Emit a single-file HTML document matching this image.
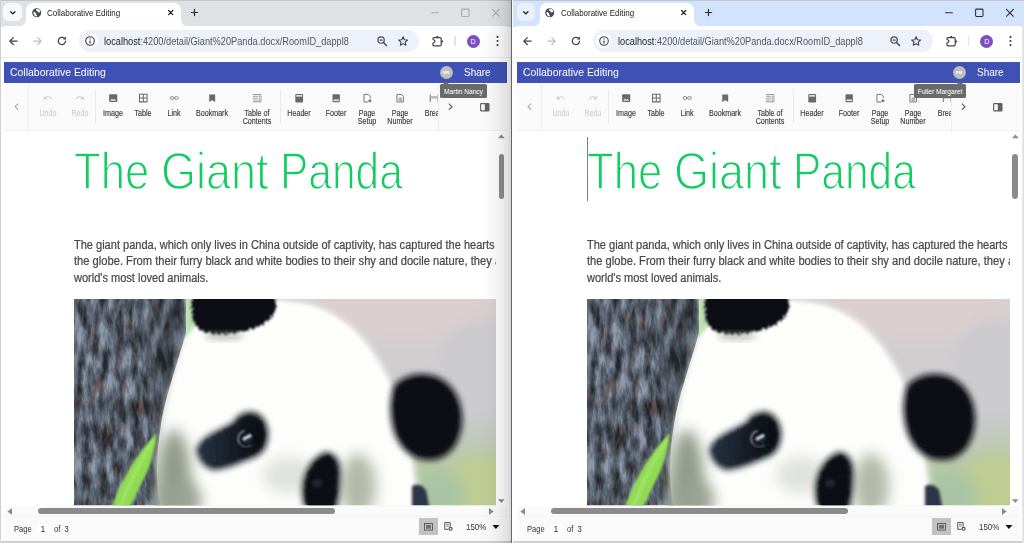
<!DOCTYPE html>
<html><head><meta charset="utf-8"><title>Collaborative Editing</title>
<style>
*{box-sizing:border-box;margin:0;padding:0}
html,body{width:1024px;height:543px;overflow:hidden;background:#fff;font-family:"Liberation Sans",sans-serif;}
.win{position:absolute;top:0;width:511px;height:543px;overflow:hidden;background:#fff}
.w1{left:0}
.w2{left:513px}
.divider{position:absolute;left:510.9px;top:0;width:1.6px;height:543px;background:#66676a}
.shadow{position:absolute;left:479px;top:0;width:32px;height:543px;background:linear-gradient(90deg,rgba(0,0,0,0) 0,rgba(0,0,0,0.012) 25%,rgba(0,0,0,0.035) 50%,rgba(0,0,0,0.07) 72%,rgba(0,0,0,0.11) 88%,rgba(0,0,0,0.17) 100%)}
.abs{position:absolute}
/* ---------- browser chrome ---------- */
.titlebar{position:absolute;left:0;top:0;width:511px;height:27px}
.inactive .titlebar{background:#dfe1e5}
.active .titlebar{background:#d3e3fd}
.topline{position:absolute;left:0;top:0;width:511px;height:1px;background:#c3c5ca}
.tabsearch{position:absolute;left:3.3px;top:2.9px;width:18.5px;height:18.6px;border-radius:5.5px}
.inactive .tabsearch{background:#f7f8fa}
.active .tabsearch{background:#e9effc}
.tab{position:absolute;left:26px;top:2.9px;width:154.7px;height:24.1px;background:#fff;border-radius:7px 7px 0 0}
.tab:before,.tab:after{content:"";position:absolute;bottom:0;width:9px;height:7px}
.tab:before{left:-9px;background:radial-gradient(ellipse 9px 7px at 0 0,transparent 95%,#fff 101%)}
.tab:after{right:-9px;background:radial-gradient(ellipse 9px 7px at 100% 0,transparent 95%,#fff 101%)}
.tabtitle{position:absolute;left:21px;top:4.1px;font-size:9.2px;line-height:12px;color:#202124;white-space:nowrap;transform:scaleX(0.867);transform-origin:0 0}
.navbar{position:absolute;left:0;top:26px;width:511px;height:31px;background:#fff;border-radius:6px 6px 0 0}
.navline{position:absolute;left:0;top:57px;width:511px;height:1px;background:#ededee}
.omni{position:absolute;left:79px;top:30.1px;width:340px;height:21.9px;border-radius:11px;background:#edf1fa}
.omni .info{position:absolute;left:3.7px;top:3.2px;width:15px;height:15px;border-radius:8px;background:#fff}
.url{position:absolute;left:25px;top:3.5px;font-size:10.6px;line-height:15px;color:#54585d;white-space:nowrap;transform:scaleX(0.870);transform-origin:0 0}
.url b{font-weight:normal;color:#1f1f1f}
.avatar{position:absolute;left:466.5px;top:35px;width:13px;height:13px;border-radius:7px;background:#7b4fc0;color:#fff;font-size:7px;line-height:13px;text-align:center}
.tbsep{position:absolute;left:454px;top:36px;width:1.8px;height:10.3px;background:#d9e5fc}
svg{position:absolute;overflow:visible}
/* ---------- app ---------- */
.edge{position:absolute;left:0;top:0;width:1.3px;height:543px;background:#cfcfcf}
.bottomedge{position:absolute;left:0;top:540.2px;width:511px;height:3px;background:linear-gradient(#f8f8f8 0,#f6f6f6 38%,#d2d2d2 46%,#cecece 100%)}
.appbar{position:absolute;left:4px;top:62.1px;width:503px;height:20.9px;background:#3f51b5;color:#fff}
.apptitle{position:absolute;left:5.5px;top:3.4px;font-size:11px;line-height:14px;white-space:nowrap;transform:scaleX(0.95);transform-origin:0 0}
.share{position:absolute;left:459.5px;top:3.4px;font-size:11px;line-height:14px;transform:scaleX(0.905);transform-origin:0 0}
.user{position:absolute;left:435.5px;top:3.9px;width:13px;height:13px;border-radius:7px;background:#bdbdbd;color:#fff;font-size:4.2px;line-height:13.8px;text-align:center;font-weight:bold}
.toolbar{position:absolute;left:4px;top:83px;width:503px;height:48px;background:#fafafa;border-bottom:1px solid #f1f1f1}
.tleft{position:absolute;left:0;top:0;width:25px;height:47px;border-right:1px solid #f0f0f0}
.tright{position:absolute;left:433.5px;top:0;width:69.5px;height:47px;border-left:1px solid #eeeeee;background:#fafafa}
.tsep{position:absolute;top:7px;width:1px;height:33px;background:#e9e9e9}
.item{position:absolute;top:0;width:0;height:46px}
.item .lbl{position:absolute;left:-40px;width:80px;top:27px;text-align:center;font-size:8.6px;line-height:7.9px;color:#3b3b3b;-webkit-text-stroke:0.15px #3b3b3b;white-space:nowrap;transform:scaleX(0.83)}
.item.dis .lbl{color:#c6c6c6;-webkit-text-stroke:0}
.item svg{left:-7.2px;top:7.8px;width:14.4px;height:14.4px}
.tip{position:absolute;top:84.3px;height:14px;border-radius:1.6px;background:#6a6a6a;color:#fff;font-size:6.6px;line-height:15.4px;text-align:center;white-space:nowrap}
.tip:before{content:"";position:absolute;top:-3px;border:3px solid transparent;border-top:0;border-bottom:3px solid #6a6a6a;margin-left:-3px}
.tip1{left:440px;width:47px}
.tip1:before{left:6px}
.tip2{left:401px;width:52px}
.tip2:before{left:46px}
/* ---------- document ---------- */
.doc{position:absolute;left:4px;top:131px;width:492.2px;height:374.6px;background:#fff;overflow:hidden}
.h1{position:absolute;left:68.5px;top:12.3px;font-size:51.5px;line-height:56px;color:#12cc62;white-space:nowrap;transform-origin:0 50%;transform:scaleX(0.849);-webkit-text-stroke:1.4px #fff;paint-order:fill stroke}
.para{position:absolute;left:70px;top:105.5px;font-size:12.3px;line-height:16.65px;color:#474747;-webkit-text-stroke:0.22px #474747;white-space:nowrap;transform:scaleX(0.896);transform-origin:0 0}
.caret{position:absolute;left:70px;top:6px;width:1px;height:64px;background:#7d7d7d}
.vscroll{position:absolute;left:496.2px;top:131px;width:10.8px;height:374.6px;background:#fff}
.vthumb{position:absolute;left:2.4px;top:22.5px;width:5.8px;height:45.4px;border-radius:3px;background:#8b8b8b}
.hscroll{position:absolute;left:4px;top:505.6px;width:503px;height:11.4px;background:#fafafa}
.hthumb{position:absolute;left:33.5px;top:2.6px;width:297px;height:5.8px;border-radius:3px;background:#8b8b8b}
.status{position:absolute;left:4px;top:515.8px;width:503px;height:24.7px;background:#fafafa;border-top:1px solid #f3f3f3;font-size:8.6px;color:#333}
.status span{position:absolute;top:7px;line-height:10px;white-space:nowrap;transform:scaleX(0.88);transform-origin:0 0}
.pgbox{position:absolute;left:33px;top:7px;width:12px;height:9.6px;background:#fff;text-align:center;line-height:10px}
.laybtn{position:absolute;left:415px;top:1.7px;width:19px;height:16.8px;background:#c2c2c2}
.inactive .wcs{stroke:#a9abaf}
.active .wcs{stroke:#2b2d31}
.chrome{position:absolute;left:0;top:0;width:511px;height:0}
.w2 .chrome{left:0.7px}
.w2 .edge{display:none}
.w2 .redge{position:absolute;left:509px;top:27px;width:2px;height:516px;background:linear-gradient(90deg,#ececec,#dcdcdc)}
.w1 .redge{display:none}
.w2 .vscroll{left:496.9px;width:10.1px}
.w2 .doc{width:492.9px}

</style></head><body>
<div class="win w1 inactive">
  <!-- browser title bar -->
  <div class="titlebar">
    <div class="topline"></div>
    <div class="chrome">
    <div class="tabsearch"><svg style="left:6.4px;top:7.8px" width="5.7" height="3.6" viewBox="0 0 8 5"><path d="M1 1 L4 4 L7 1" fill="none" stroke="#1f1f1f" stroke-width="1.9" stroke-linecap="round" stroke-linejoin="round"/></svg></div>
    <div class="tab">
      <svg style="left:5.8px;top:4.9px" width="9.4" height="9.4" viewBox="0 0 20 20"><circle cx="10" cy="10" r="9.6" fill="#474b50"/><path d="M3.2 8.2 L6.5 9 L8.8 11.5 L8.6 14 L10.6 15.6 L10.2 18 L7 17.5 L4 14.5 Z M8.2 2.4 L13 2.2 L16.4 4.4 L17.6 8 L15 9.6 L12.4 8.8 L11.6 6.2 L9.2 5.6 Z" fill="#fff"/></svg>
      <div class="tabtitle">Collaborative Editing</div>
      <svg style="left:141.6px;top:7.1px" width="5.4" height="5.2" viewBox="0 0 7 7"><path d="M0.7 0.7 L6.3 6.3 M6.3 0.7 L0.7 6.3" stroke="#202124" stroke-width="1.7" stroke-linecap="round"/></svg>
    </div>
    <svg style="left:191.3px;top:9px" width="7" height="7" viewBox="0 0 9 9"><path d="M4.5 0.5 V8.5 M0.5 4.5 H8.5" stroke="#2a2c30" stroke-width="1.6" stroke-linecap="round"/></svg>
    <!-- window controls -->
    <svg class="wc" style="left:430px;top:8px" width="70" height="10" viewBox="0 0 70 10">
      <path class="wcs" d="M1.6 4.8 H8.4 M32.5 1.1 H38.1 Q39 1.1 39 2 V7.6 Q39 8.5 38.1 8.5 H32.5 Q31.6 8.5 31.6 7.6 V2 Q31.6 1.1 32.5 1.1 Z M62.5 1.3 L69.3 8.3 M69.3 1.3 L62.5 8.3" fill="none" stroke-width="1.05" stroke-linecap="round"/>
    </svg>
    </div>
  </div>
  <!-- nav bar -->
  <div class="navbar"></div>
  <div class="navline"></div>
  <div class="chrome">
  <svg style="left:9.4px;top:37px" width="9" height="8.2" viewBox="0 0 11 10"><path d="M5.2 0.8 L1 5 L5.2 9.2 M1.2 5 H10" fill="none" stroke="#3c4043" stroke-width="1.5" stroke-linecap="round" stroke-linejoin="round"/></svg>
  <svg style="left:33px;top:37px" width="9" height="8.2" viewBox="0 0 11 10"><path d="M5.8 0.8 L10 5 L5.8 9.2 M9.8 5 H1" fill="none" stroke="#bbbdc0" stroke-width="1.5" stroke-linecap="round" stroke-linejoin="round"/></svg>
  <svg style="left:57px;top:36.3px" width="10" height="10" viewBox="0 0 11 11"><path d="M9.4 5.5 A4 4 0 1 1 8.1 2.5" fill="none" stroke="#3c4043" stroke-width="1.35" stroke-linecap="round"/><path d="M9.9 0.6 V3.9 H6.6 Z" fill="#3c4043"/></svg>
  <div class="omni">
    <div class="info"><svg style="left:2.5px;top:2.5px" width="10" height="10" viewBox="0 0 10 10"><circle cx="5" cy="5" r="4.3" fill="none" stroke="#3c4043" stroke-width="1.1"/><path d="M5 4.4 V7.4" stroke="#3c4043" stroke-width="1.2"/><circle cx="5" cy="2.9" r="0.7" fill="#3c4043"/></svg></div>
    <div class="url"><b>localhost</b>:4200/detail/Giant%20Panda.docx/RoomID_dappl8</div>
    <svg style="left:297.6px;top:5.6px" width="10.5" height="10.5" viewBox="0 0 11 11"><circle cx="4.3" cy="4.3" r="3.3" fill="none" stroke="#45494e" stroke-width="1.25"/><path d="M6.8 6.8 L10 10" stroke="#45494e" stroke-width="1.5" stroke-linecap="round"/><path d="M2.7 4.3 H5.9" stroke="#3c4043" stroke-width="1.2"/></svg>
    <svg style="left:318.8px;top:5.7px" width="10.2" height="10.2" viewBox="0 0 22 22"><path d="M11 1.8 L13.8 8 L20.6 8.7 L15.5 13.2 L17 19.9 L11 16.4 L5 19.9 L6.5 13.2 L1.4 8.7 L8.2 8 Z" fill="none" stroke="#3c4043" stroke-width="2.3" stroke-linejoin="round"/></svg>
  </div>
  <svg style="left:430px;top:33px" width="16" height="16" viewBox="0 0 16 16"><path d="M4 4.7 H10.1 Q11.2 4.7 11.2 5.8 V11.7 Q11.2 12.8 10.1 12.8 H4 Q2.9 12.8 2.9 11.7 V10.7 Q2.9 10.1 3.6 9.8 Q4.9 9.3 4.9 8.3 Q4.9 7.3 3.6 6.8 Q2.9 6.5 2.9 5.9 V5.8 Q2.9 4.7 4 4.7 Z" fill="none" stroke="#40444a" stroke-width="1.2" stroke-linejoin="round"/><path d="M6 4.7 Q6.1 2.7 7.3 2.7 Q8.5 2.7 8.6 4.7 Z" fill="#40444a"/><path d="M11.2 7.2 Q13.1 7.3 13.1 8.5 Q13.1 9.7 11.2 9.8 Z" fill="#40444a"/></svg>
  <div class="tbsep"></div>
  <div class="avatar">D</div>
  <svg style="left:495.5px;top:35.2px" width="3" height="12" viewBox="0 0 3 12"><circle cx="1.5" cy="1.9" r="1.05" fill="#3c4043"/><circle cx="1.5" cy="6" r="1.05" fill="#3c4043"/><circle cx="1.5" cy="10.1" r="1.05" fill="#3c4043"/></svg>
  </div>

  <!-- app -->
  <div class="edge"></div>
  <div class="appbar">
    <div class="apptitle">Collaborative Editing</div>
    <div class="user">MN</div>
    <div class="share">Share</div>
  </div>
  <div class="toolbar">
    <div class="tleft"><svg style="left:9.6px;top:20px" width="5" height="7.4" viewBox="0 0 6 9"><path d="M5 0.8 L1.2 4.5 L5 8.2" fill="none" stroke="#a2a2a2" stroke-width="1.25"/></svg></div>
    <div class="item dis" style="left:44px"><svg style="left:-4.95px;top:10.2px;width:9.7px;height:9.7px" viewBox="0 0 24 24"><path d="M12.5 8c-2.65 0-5.05.99-6.9 2.6L2 7v9h9l-3.62-3.62c1.39-1.16 3.16-1.88 5.12-1.88 3.54 0 6.55 2.31 7.6 5.5l2.37-.78C21.08 11.03 17.15 8 12.5 8z" fill="#cfcfcf"/></svg><div class="lbl">Undo</div></div>
    <div class="item dis" style="left:76px"><svg style="left:-4.75px;top:10.2px;width:9.7px;height:9.7px" viewBox="0 0 24 24"><path d="M18.4 10.6C16.55 8.99 14.15 8 11.5 8c-4.65 0-8.58 3.03-9.96 7.22L3.9 16c1.05-3.19 4.05-5.5 7.6-5.5 1.95 0 3.73.72 5.12 1.88L13 16h9V7l-3.6 3.6z" fill="#cfcfcf"/></svg><div class="lbl">Redo</div></div>
    <div class="tsep" style="left:91px"></div>
    <div class="item" style="left:109px"><svg viewBox="0 0 16 16"><rect x="3.5" y="3.7" width="9" height="8.6" rx="0.9" fill="#686868"/><path d="M4.8 10.8 L6.6 8.4 L7.9 10 L9.4 8.6 L11.2 10.8 Z" fill="#f2f2f2"/></svg><div class="lbl">Image</div></div>
    <div class="item" style="left:139px"><svg viewBox="0 0 16 16"><path d="M3.9 3.7 H12.3 V12.1 H3.9 Z M8.1 3.7 V12.1 M3.9 7.9 H12.3" fill="none" stroke="#6c6c6c" stroke-width="1.15"/></svg><div class="lbl">Table</div></div>
    <div class="item" style="left:170px"><svg viewBox="0 0 16 16"><ellipse cx="5.6" cy="7.8" rx="2.1" ry="1.6" fill="none" stroke="#7a7a7a" stroke-width="0.95"/><ellipse cx="10.4" cy="7.8" rx="2.1" ry="1.6" fill="none" stroke="#7a7a7a" stroke-width="0.95"/></svg><div class="lbl">Link</div></div>
    <div class="item" style="left:208px"><svg viewBox="0 0 16 16"><path d="M4.7 3.8 H11.3 V12.2 L8 10.3 L4.7 12.2 Z" fill="#6a6a6a"/></svg><div class="lbl">Bookmark</div></div>
    <div class="item" style="left:253px"><svg viewBox="0 0 16 16"><path d="M3.3 4 H12.7 M3.3 12 H12.7" stroke="#7a7a7a" stroke-width="0.9" fill="none"/><path d="M3.3 6 H8.8 M3.3 8 H8.8 M3.3 10 H8.8" stroke="#9a9a9a" stroke-width="0.9" fill="none"/><path d="M10.2 5.6 H12.3 V10.4 H10.2 Z" fill="none" stroke="#8a8a8a" stroke-width="0.8"/></svg><div class="lbl">Table of<br>Contents</div></div>
    <div class="tsep" style="left:276px"></div>
    <div class="item" style="left:295px"><svg viewBox="0 0 16 16"><rect x="3.7" y="3.4" width="8.6" height="9.4" rx="0.9" fill="#696969"/><rect x="4.7" y="4.5" width="6.6" height="1.8" fill="#e4e4e4"/></svg><div class="lbl">Header</div></div>
    <div class="item" style="left:332px"><svg viewBox="0 0 16 16"><rect x="3.9" y="3.6" width="8.2" height="8.8" rx="0.9" fill="#696969"/><rect x="4.9" y="9.4" width="6.2" height="1.8" fill="#e4e4e4"/></svg><div class="lbl">Footer</div></div>
    <div class="item" style="left:363px"><svg viewBox="0 0 16 16"><path d="M4.4 3.8 H9.2 L11.4 6 V8 M4.4 3.8 V12.2 H9" fill="none" stroke="#6a6a6a" stroke-width="1"/><circle cx="11" cy="10.8" r="1.7" fill="#7a7a7a"/></svg><div class="lbl">Page<br>Setup</div></div>
    <div class="item" style="left:396px"><svg viewBox="0 0 16 16"><path d="M4.4 3.8 H9.4 L11.6 6 V12.2 H4.4 Z" fill="none" stroke="#6a6a6a" stroke-width="1"/><path d="M6.6 8 H9.6 V10.4 H6.6 Z M8.1 7.2 V11" fill="none" stroke="#8a8a8a" stroke-width="0.8"/></svg><div class="lbl">Page<br>Number</div></div>
    <div class="item" style="left:430.4px"><svg viewBox="0 0 16 16"><path d="M3.6 4 V12.2 M12.4 4 V12.2" fill="none" stroke="#6a6a6a" stroke-width="1.1"/><rect x="4.2" y="5.8" width="7.6" height="2.6" fill="#b4b4b4"/></svg><div class="lbl">Break</div></div>
    <div class="tright">
      <svg style="left:9.6px;top:19.6px" width="5" height="7.5" viewBox="0 0 6 9"><path d="M1 0.8 L4.8 4.5 L1 8.2" fill="none" stroke="#555a60" stroke-width="1.3"/></svg>
      <svg style="left:41.7px;top:19.6px" width="9.6" height="8.5" viewBox="0 0 10 9"><rect x="0.6" y="0.6" width="8.8" height="7.8" rx="0.8" fill="none" stroke="#616161" stroke-width="1.2"/><rect x="5" y="0.6" width="4.4" height="7.8" fill="#616161"/></svg>
    </div>
  </div>
  <div class="tip tip1">Martin Nancy</div>

  <!-- document -->
  <div class="doc">
    <div class="h1" style="left:69.7px">The</div><div class="h1" style="left:156.5px;transform:scaleX(0.874)">Giant</div><div class="h1" style="left:276.4px;transform:scaleX(0.825)">Panda</div>
    <div class="para">The giant panda, which only lives in China outside of captivity, has captured the hearts of people around</div>
    <div class="para" style="top:122.15px;transform:scaleX(0.907)">the globe. From their furry black and white bodies to their shy and docile nature, they are one of the</div>
    <div class="para" style="top:138.8px">world's most loved animals.</div>
    <svg class="panda" style="left:70px;top:168.4px;overflow:hidden" width="430" height="206.3" viewBox="0 0 430 205" preserveAspectRatio="none">
<defs>
  <linearGradient id="bgw1" x1="0" y1="0" x2="0" y2="1">
    <stop offset="0" stop-color="#d9d0d1"/><stop offset="0.35" stop-color="#cfcdcf"/><stop offset="0.62" stop-color="#c6c9c3"/><stop offset="0.82" stop-color="#b7c8a6"/><stop offset="1" stop-color="#b9ca98"/>
  </linearGradient>
  <radialGradient id="hdw1" cx="0.55" cy="0.35" r="0.75">
    <stop offset="0" stop-color="#ffffff"/><stop offset="0.6" stop-color="#fbfbfa"/><stop offset="1" stop-color="#e9ebe6"/>
  </radialGradient>
  <linearGradient id="epw1" x1="0" y1="0" x2="1" y2="0"><stop offset="0" stop-color="#27313d"/><stop offset="0.45" stop-color="#18202a"/><stop offset="0.75" stop-color="#0f131a"/><stop offset="1" stop-color="#0d1016"/></linearGradient>
  <filter id="b1w1" x="-20%" y="-20%" width="140%" height="140%"><feGaussianBlur stdDeviation="1.6"/></filter>
  <filter id="b2w1" x="-30%" y="-30%" width="160%" height="160%"><feGaussianBlur stdDeviation="3"/></filter>
  <filter id="b3w1" x="-40%" y="-40%" width="180%" height="180%"><feGaussianBlur stdDeviation="7"/></filter>
  <filter id="furw1" x="-20%" y="-20%" width="140%" height="140%"><feTurbulence type="fractalNoise" baseFrequency="0.32" numOctaves="2" seed="5" result="t"/><feDisplacementMap in="SourceGraphic" in2="t" scale="7" xChannelSelector="R" yChannelSelector="G" result="d"/><feGaussianBlur in="d" stdDeviation="1.1"/></filter>
  <filter id="b0w1" x="-20%" y="-20%" width="140%" height="140%"><feGaussianBlur stdDeviation="0.8"/></filter>
  <filter id="barkw1" x="0" y="0" width="100%" height="100%" color-interpolation-filters="sRGB">
    <feTurbulence type="fractalNoise" baseFrequency="0.12 0.04" numOctaves="4" seed="3" result="n"/>
    <feColorMatrix in="n" type="matrix" values="1.9 0 0 0 -0.44  1.9 0 0 0 -0.44  1.9 0 0 0 -0.44  0 0 0 0 1" result="g"/>
    <feComponentTransfer in="g" result="col">
      <feFuncR type="table" tableValues="0.14 0.21 0.29 0.37 0.46 0.56"/>
      <feFuncG type="table" tableValues="0.15 0.225 0.315 0.405 0.50 0.60"/>
      <feFuncB type="table" tableValues="0.17 0.25 0.355 0.46 0.56 0.67"/>
    </feComponentTransfer>
    <feTurbulence type="fractalNoise" baseFrequency="0.14 0.05" numOctaves="2" seed="33" result="n2"/>
    <feColorMatrix in="n2" type="matrix" values="0 0 0 0 0  0 0 0 0 0  0 0 0 0 0  0 3 0 0 -1.85" result="a2"/>
    <feFlood flood-color="#8a5f52" result="br"/>
    <feComposite in="br" in2="a2" operator="in" result="brown"/>
    <feMerge result="m0"><feMergeNode in="col"/><feMergeNode in="brown"/></feMerge><feGaussianBlur in="m0" stdDeviation="0.5" result="m"/>
    <feComposite in="m" in2="SourceGraphic" operator="in"/>
  </filter>
  <clipPath id="cpw1"><rect x="0" y="0" width="430" height="205"/></clipPath>
</defs>
<g clip-path="url(#cpw1)">
  <rect width="430" height="205" fill="url(#bgw1)"/>
  <!-- background blobs -->
  <ellipse cx="330" cy="10" rx="80" ry="28" fill="#dccfcf" filter="url(#b3w1)"/>
  <ellipse cx="405" cy="70" rx="40" ry="50" fill="#cccbce" filter="url(#b3w1)"/>
  <ellipse cx="410" cy="190" rx="40" ry="35" fill="#bfcc92" filter="url(#b3w1)"/>
  <ellipse cx="365" cy="195" rx="25" ry="25" fill="#a9c4a4" filter="url(#b3w1)"/>
  <!-- green strip between trunk and ear -->
  <rect x="106" y="-4" width="16" height="46" fill="#b9dfae" filter="url(#b1w1)"/>
  <!-- trunk -->
  <g filter="url(#barkw1)"><rect x="-2" y="-2" width="130" height="210" fill="#666d7e"/></g>
  <rect x="78" y="-2" width="40" height="210" fill="#23252c" opacity="0.32" filter="url(#b3w1)"/>
  <!-- cover right part of trunk block with bg where not trunk -->
  <path d="M112 -2 L112 34 Q104 60 98.6 78 Q90 105 87.5 122 Q83 150 83 167 Q83 190 87 207 L132 207 L132 -2 Z" fill="#dfe3da"/>
  <rect x="112" y="-4" width="10" height="44" fill="#b9dfae" filter="url(#b1w1)"/>
  <!-- head -->
  <path d="M113 38 Q150 -12 233 5 Q270 14 296 48 Q318 78 333 120 Q340 160 347 210 L84 210 Q80 165 88 122 Q94 92 113 38 Z" fill="url(#hdw1)" filter="url(#b2w1)"/>
  <path d="M113 38 Q150 -8 233 7 Q268 16 293 50 Q315 80 330 122 Q337 160 343 210 L90 210 Q85 165 92 122 Q98 92 113 38 Z" fill="#fdfdfc" filter="url(#b1w1)"/>
  <!-- lower-left greyish fur -->
  <ellipse cx="100" cy="180" rx="17" ry="50" fill="#8c9685" opacity="0.95" filter="url(#b3w1)"/>
  <ellipse cx="106" cy="200" rx="22" ry="20" fill="#98a291" opacity="0.9" filter="url(#b3w1)"/>
  <ellipse cx="215" cy="175" rx="26" ry="18" fill="#dcdfd9" opacity="0.9" filter="url(#b3w1)"/>
  <ellipse cx="284" cy="186" rx="18" ry="32" fill="#a5ad98" opacity="0.85" filter="url(#b3w1)"/>
  <!-- top-left ear -->
  <path d="M118 -4 L118 20 Q124 33 141 34.5 Q160 36 178 30 Q196 24 202 10 Q203 2 198 -4 Z" fill="#0d1014" filter="url(#furw1)"/>
  <ellipse cx="150" cy="37" rx="20" ry="4" fill="#8e9a86" opacity="0.55" filter="url(#b2w1)"/>
  <!-- right ear -->
  <path d="M320 86 Q334 72 354 75 Q378 79 386 104 Q392 126 381 146 Q368 164 346 159 Q328 154 320 132 Q313 108 320 86 Z" fill="#0c0f14" filter="url(#b2w1)"/>
  <path d="M324 90 Q336 78 354 80 Q374 84 381 106 Q386 126 376 143 Q365 157 347 153 Q331 148 325 130 Q319 108 324 90 Z" fill="#0b0e13" filter="url(#furw1)"/>
  <!-- shoulder dark -->
  <path d="M338 186 Q346 182 352 190 L356 210 L338 210 Z" fill="#2c3446" filter="url(#b1w1)"/>
  <!-- left eye patch -->
  <path d="M122 150 Q124 141 139 133 Q151 127 159 123 Q165 112 178 112 Q191 114 194 132 Q194 147 187 153 Q181 158 172 160 Q156 168 140 170 Q126 167 122 150 Z" fill="url(#epw1)" filter="url(#b2w1)"/>
  <path d="M127 150 Q129 143 142 136 Q153 130 162 126 Q167 117 178 117 Q188 119 190 132 Q190 145 184 150 Q179 154 171 156 Q156 163 141 165 Q130 163 127 150 Z" fill="url(#epw1)" filter="url(#furw1)"/>
  <circle cx="172.8" cy="138.6" r="7.6" fill="#0b0d12" filter="url(#b0w1)"/>
  <path d="M166.2 144 A7.8 7.8 0 0 1 171 131.2" fill="none" stroke="#c4ccd8" stroke-width="1.5" opacity="0.75" filter="url(#b0w1)"/>
  <path d="M166.4 144.2 A7.8 7.8 0 0 0 178 144.6" fill="none" stroke="#9aa4b4" stroke-width="1.3" opacity="0.6" filter="url(#b0w1)"/>
  <circle cx="173.2" cy="138.8" r="5.4" fill="#1b2634" filter="url(#b0w1)"/>
  <path d="M168.4 138.4 L176.6 134 L177.8 136.4 L169.6 140.8 Z" fill="#dcebff" filter="url(#b0w1)"/>
  <!-- right eye patch -->
  <path d="M230 178 Q236 158 252 152 Q266 154 266 172 Q266 192 262 210 L232 210 Q226 194 230 178 Z" fill="#0e1217" filter="url(#b2w1)"/>
  <path d="M233 180 Q238 162 252 157 Q262 158 262 174 Q262 192 259 210 L235 210 Q230 194 233 180 Z" fill="#0c1015" filter="url(#furw1)"/>
  <ellipse cx="243" cy="183" rx="5" ry="4" fill="#232830" filter="url(#b1w1)"/>
  <!-- bamboo leaf -->
  <path d="M38 207 Q52 166 82.5 133 Q81 158 68 182 Q61 196 56 207 Z" fill="#8fdc52" filter="url(#b0w1)"/>
  <path d="M46 207 Q60 170 80 140" stroke="#b4ea7c" stroke-width="2.4" fill="none" opacity="0.75" filter="url(#b1w1)"/>
</g>
</svg>

    
  </div>
  <div class="vscroll">
    <svg style="left:1.9px;top:3.1px" width="6.8" height="4.4" viewBox="0 0 8 5"><path d="M0 5 L4 0.4 L8 5 Z" fill="#8b8b8b"/></svg>
    <div class="vthumb"></div>
    <svg style="left:2.2px;top:367.6px" width="6.6" height="4.4" viewBox="0 0 8 5"><path d="M0 0 L4 4.6 L8 0 Z" fill="#8b8b8b"/></svg>
  </div>
  <div class="hscroll">
    <svg style="left:3px;top:2.5px" width="5" height="7" viewBox="0 0 5 7"><path d="M5 0 L0.4 3.5 L5 7 Z" fill="#8b8b8b"/></svg>
    <div class="hthumb"></div>
    <svg style="left:484.9px;top:2.5px" width="5" height="7" viewBox="0 0 5 7"><path d="M0 0 L4.6 3.5 L0 7 Z" fill="#8b8b8b"/></svg>
  </div>
  <div class="status">
    <span style="left:10px">Page</span>
    <div class="pgbox">1</div>
    <span style="left:49.5px">of&nbsp; 3</span>
    <div class="laybtn"><svg style="left:5px;top:4.6px" width="9" height="7.6" viewBox="0 0 9 7.6"><rect x="0.5" y="0.5" width="8" height="6.6" fill="none" stroke="#555" stroke-width="0.9"/><rect x="2" y="1.9" width="5" height="3.8" fill="#6e6e6e"/></svg></div>
    <svg style="left:439.7px;top:5px" width="9.4" height="9.4" viewBox="0 0 10 10"><path d="M0.8 0.6 H6.6 V5 M0.8 0.6 V7.8 H4.6" fill="none" stroke="#4a4a4a" stroke-width="1"/><path d="M2.2 2.6 H5.2 M2.2 4.4 H5.2" stroke="#6a6a6a" stroke-width="0.8"/><circle cx="7" cy="7.2" r="2.2" fill="#4a4a4a"/><circle cx="7" cy="7.2" r="1" fill="#fafafa"/></svg>
    <span style="left:462px;top:5.3px;transform:scaleX(0.92)">150%</span>
    <svg style="left:487.8px;top:7.9px" width="7.8" height="4.4" viewBox="0 0 8 5"><path d="M0 0 H8 L4 4.6 Z" fill="#111"/></svg>
  </div>
  <div class="bottomedge"></div>
  <div class="redge"></div>
</div>

<div class="win w2 active">
  <!-- browser title bar -->
  <div class="titlebar">
    <div class="topline"></div>
    <div class="chrome">
    <div class="tabsearch"><svg style="left:6.4px;top:7.8px" width="5.7" height="3.6" viewBox="0 0 8 5"><path d="M1 1 L4 4 L7 1" fill="none" stroke="#1f1f1f" stroke-width="1.9" stroke-linecap="round" stroke-linejoin="round"/></svg></div>
    <div class="tab">
      <svg style="left:5.8px;top:4.9px" width="9.4" height="9.4" viewBox="0 0 20 20"><circle cx="10" cy="10" r="9.6" fill="#474b50"/><path d="M3.2 8.2 L6.5 9 L8.8 11.5 L8.6 14 L10.6 15.6 L10.2 18 L7 17.5 L4 14.5 Z M8.2 2.4 L13 2.2 L16.4 4.4 L17.6 8 L15 9.6 L12.4 8.8 L11.6 6.2 L9.2 5.6 Z" fill="#fff"/></svg>
      <div class="tabtitle">Collaborative Editing</div>
      <svg style="left:141.6px;top:7.1px" width="5.4" height="5.2" viewBox="0 0 7 7"><path d="M0.7 0.7 L6.3 6.3 M6.3 0.7 L0.7 6.3" stroke="#202124" stroke-width="1.7" stroke-linecap="round"/></svg>
    </div>
    <svg style="left:191.3px;top:9px" width="7" height="7" viewBox="0 0 9 9"><path d="M4.5 0.5 V8.5 M0.5 4.5 H8.5" stroke="#2a2c30" stroke-width="1.6" stroke-linecap="round"/></svg>
    <!-- window controls -->
    <svg class="wc" style="left:430px;top:8px" width="70" height="10" viewBox="0 0 70 10">
      <path class="wcs" d="M1.6 4.8 H8.4 M32.5 1.1 H38.1 Q39 1.1 39 2 V7.6 Q39 8.5 38.1 8.5 H32.5 Q31.6 8.5 31.6 7.6 V2 Q31.6 1.1 32.5 1.1 Z M62.5 1.3 L69.3 8.3 M69.3 1.3 L62.5 8.3" fill="none" stroke-width="1.05" stroke-linecap="round"/>
    </svg>
    </div>
  </div>
  <!-- nav bar -->
  <div class="navbar"></div>
  <div class="navline"></div>
  <div class="chrome">
  <svg style="left:9.4px;top:37px" width="9" height="8.2" viewBox="0 0 11 10"><path d="M5.2 0.8 L1 5 L5.2 9.2 M1.2 5 H10" fill="none" stroke="#3c4043" stroke-width="1.5" stroke-linecap="round" stroke-linejoin="round"/></svg>
  <svg style="left:33px;top:37px" width="9" height="8.2" viewBox="0 0 11 10"><path d="M5.8 0.8 L10 5 L5.8 9.2 M9.8 5 H1" fill="none" stroke="#bbbdc0" stroke-width="1.5" stroke-linecap="round" stroke-linejoin="round"/></svg>
  <svg style="left:57px;top:36.3px" width="10" height="10" viewBox="0 0 11 11"><path d="M9.4 5.5 A4 4 0 1 1 8.1 2.5" fill="none" stroke="#3c4043" stroke-width="1.35" stroke-linecap="round"/><path d="M9.9 0.6 V3.9 H6.6 Z" fill="#3c4043"/></svg>
  <div class="omni">
    <div class="info"><svg style="left:2.5px;top:2.5px" width="10" height="10" viewBox="0 0 10 10"><circle cx="5" cy="5" r="4.3" fill="none" stroke="#3c4043" stroke-width="1.1"/><path d="M5 4.4 V7.4" stroke="#3c4043" stroke-width="1.2"/><circle cx="5" cy="2.9" r="0.7" fill="#3c4043"/></svg></div>
    <div class="url"><b>localhost</b>:4200/detail/Giant%20Panda.docx/RoomID_dappl8</div>
    <svg style="left:297.6px;top:5.6px" width="10.5" height="10.5" viewBox="0 0 11 11"><circle cx="4.3" cy="4.3" r="3.3" fill="none" stroke="#45494e" stroke-width="1.25"/><path d="M6.8 6.8 L10 10" stroke="#45494e" stroke-width="1.5" stroke-linecap="round"/><path d="M2.7 4.3 H5.9" stroke="#3c4043" stroke-width="1.2"/></svg>
    <svg style="left:318.8px;top:5.7px" width="10.2" height="10.2" viewBox="0 0 22 22"><path d="M11 1.8 L13.8 8 L20.6 8.7 L15.5 13.2 L17 19.9 L11 16.4 L5 19.9 L6.5 13.2 L1.4 8.7 L8.2 8 Z" fill="none" stroke="#3c4043" stroke-width="2.3" stroke-linejoin="round"/></svg>
  </div>
  <svg style="left:430px;top:33px" width="16" height="16" viewBox="0 0 16 16"><path d="M4 4.7 H10.1 Q11.2 4.7 11.2 5.8 V11.7 Q11.2 12.8 10.1 12.8 H4 Q2.9 12.8 2.9 11.7 V10.7 Q2.9 10.1 3.6 9.8 Q4.9 9.3 4.9 8.3 Q4.9 7.3 3.6 6.8 Q2.9 6.5 2.9 5.9 V5.8 Q2.9 4.7 4 4.7 Z" fill="none" stroke="#40444a" stroke-width="1.2" stroke-linejoin="round"/><path d="M6 4.7 Q6.1 2.7 7.3 2.7 Q8.5 2.7 8.6 4.7 Z" fill="#40444a"/><path d="M11.2 7.2 Q13.1 7.3 13.1 8.5 Q13.1 9.7 11.2 9.8 Z" fill="#40444a"/></svg>
  <div class="tbsep"></div>
  <div class="avatar">D</div>
  <svg style="left:495.5px;top:35.2px" width="3" height="12" viewBox="0 0 3 12"><circle cx="1.5" cy="1.9" r="1.05" fill="#3c4043"/><circle cx="1.5" cy="6" r="1.05" fill="#3c4043"/><circle cx="1.5" cy="10.1" r="1.05" fill="#3c4043"/></svg>
  </div>

  <!-- app -->
  <div class="edge"></div>
  <div class="appbar">
    <div class="apptitle">Collaborative Editing</div>
    <div class="user">FM</div>
    <div class="share">Share</div>
  </div>
  <div class="toolbar">
    <div class="tleft"><svg style="left:9.6px;top:20px" width="5" height="7.4" viewBox="0 0 6 9"><path d="M5 0.8 L1.2 4.5 L5 8.2" fill="none" stroke="#a2a2a2" stroke-width="1.25"/></svg></div>
    <div class="item dis" style="left:44px"><svg style="left:-4.95px;top:10.2px;width:9.7px;height:9.7px" viewBox="0 0 24 24"><path d="M12.5 8c-2.65 0-5.05.99-6.9 2.6L2 7v9h9l-3.62-3.62c1.39-1.16 3.16-1.88 5.12-1.88 3.54 0 6.55 2.31 7.6 5.5l2.37-.78C21.08 11.03 17.15 8 12.5 8z" fill="#cfcfcf"/></svg><div class="lbl">Undo</div></div>
    <div class="item dis" style="left:76px"><svg style="left:-4.75px;top:10.2px;width:9.7px;height:9.7px" viewBox="0 0 24 24"><path d="M18.4 10.6C16.55 8.99 14.15 8 11.5 8c-4.65 0-8.58 3.03-9.96 7.22L3.9 16c1.05-3.19 4.05-5.5 7.6-5.5 1.95 0 3.73.72 5.12 1.88L13 16h9V7l-3.6 3.6z" fill="#cfcfcf"/></svg><div class="lbl">Redo</div></div>
    <div class="tsep" style="left:91px"></div>
    <div class="item" style="left:109px"><svg viewBox="0 0 16 16"><rect x="3.5" y="3.7" width="9" height="8.6" rx="0.9" fill="#686868"/><path d="M4.8 10.8 L6.6 8.4 L7.9 10 L9.4 8.6 L11.2 10.8 Z" fill="#f2f2f2"/></svg><div class="lbl">Image</div></div>
    <div class="item" style="left:139px"><svg viewBox="0 0 16 16"><path d="M3.9 3.7 H12.3 V12.1 H3.9 Z M8.1 3.7 V12.1 M3.9 7.9 H12.3" fill="none" stroke="#6c6c6c" stroke-width="1.15"/></svg><div class="lbl">Table</div></div>
    <div class="item" style="left:170px"><svg viewBox="0 0 16 16"><ellipse cx="5.6" cy="7.8" rx="2.1" ry="1.6" fill="none" stroke="#7a7a7a" stroke-width="0.95"/><ellipse cx="10.4" cy="7.8" rx="2.1" ry="1.6" fill="none" stroke="#7a7a7a" stroke-width="0.95"/></svg><div class="lbl">Link</div></div>
    <div class="item" style="left:208px"><svg viewBox="0 0 16 16"><path d="M4.7 3.8 H11.3 V12.2 L8 10.3 L4.7 12.2 Z" fill="#6a6a6a"/></svg><div class="lbl">Bookmark</div></div>
    <div class="item" style="left:253px"><svg viewBox="0 0 16 16"><path d="M3.3 4 H12.7 M3.3 12 H12.7" stroke="#7a7a7a" stroke-width="0.9" fill="none"/><path d="M3.3 6 H8.8 M3.3 8 H8.8 M3.3 10 H8.8" stroke="#9a9a9a" stroke-width="0.9" fill="none"/><path d="M10.2 5.6 H12.3 V10.4 H10.2 Z" fill="none" stroke="#8a8a8a" stroke-width="0.8"/></svg><div class="lbl">Table of<br>Contents</div></div>
    <div class="tsep" style="left:276px"></div>
    <div class="item" style="left:295px"><svg viewBox="0 0 16 16"><rect x="3.7" y="3.4" width="8.6" height="9.4" rx="0.9" fill="#696969"/><rect x="4.7" y="4.5" width="6.6" height="1.8" fill="#e4e4e4"/></svg><div class="lbl">Header</div></div>
    <div class="item" style="left:332px"><svg viewBox="0 0 16 16"><rect x="3.9" y="3.6" width="8.2" height="8.8" rx="0.9" fill="#696969"/><rect x="4.9" y="9.4" width="6.2" height="1.8" fill="#e4e4e4"/></svg><div class="lbl">Footer</div></div>
    <div class="item" style="left:363px"><svg viewBox="0 0 16 16"><path d="M4.4 3.8 H9.2 L11.4 6 V8 M4.4 3.8 V12.2 H9" fill="none" stroke="#6a6a6a" stroke-width="1"/><circle cx="11" cy="10.8" r="1.7" fill="#7a7a7a"/></svg><div class="lbl">Page<br>Setup</div></div>
    <div class="item" style="left:396px"><svg viewBox="0 0 16 16"><path d="M4.4 3.8 H9.4 L11.6 6 V12.2 H4.4 Z" fill="none" stroke="#6a6a6a" stroke-width="1"/><path d="M6.6 8 H9.6 V10.4 H6.6 Z M8.1 7.2 V11" fill="none" stroke="#8a8a8a" stroke-width="0.8"/></svg><div class="lbl">Page<br>Number</div></div>
    <div class="item" style="left:430.4px"><svg viewBox="0 0 16 16"><path d="M3.6 4 V12.2 M12.4 4 V12.2" fill="none" stroke="#6a6a6a" stroke-width="1.1"/><rect x="4.2" y="5.8" width="7.6" height="2.6" fill="#b4b4b4"/></svg><div class="lbl">Break</div></div>
    <div class="tright">
      <svg style="left:9.6px;top:19.6px" width="5" height="7.5" viewBox="0 0 6 9"><path d="M1 0.8 L4.8 4.5 L1 8.2" fill="none" stroke="#555a60" stroke-width="1.3"/></svg>
      <svg style="left:41.7px;top:19.6px" width="9.6" height="8.5" viewBox="0 0 10 9"><rect x="0.6" y="0.6" width="8.8" height="7.8" rx="0.8" fill="none" stroke="#616161" stroke-width="1.2"/><rect x="5" y="0.6" width="4.4" height="7.8" fill="#616161"/></svg>
    </div>
  </div>
  <div class="tip tip2">Fuller Margaret</div>

  <!-- document -->
  <div class="doc">
    <div class="h1" style="left:69.7px">The</div><div class="h1" style="left:156.5px;transform:scaleX(0.874)">Giant</div><div class="h1" style="left:276.4px;transform:scaleX(0.825)">Panda</div>
    <div class="para">The giant panda, which only lives in China outside of captivity, has captured the hearts of people around</div>
    <div class="para" style="top:122.15px;transform:scaleX(0.907)">the globe. From their furry black and white bodies to their shy and docile nature, they are one of the</div>
    <div class="para" style="top:138.8px">world's most loved animals.</div>
    <svg class="panda" style="left:70px;top:168.4px;overflow:hidden" width="430" height="206.3" viewBox="0 0 430 205" preserveAspectRatio="none">
<defs>
  <linearGradient id="bgw2" x1="0" y1="0" x2="0" y2="1">
    <stop offset="0" stop-color="#d9d0d1"/><stop offset="0.35" stop-color="#cfcdcf"/><stop offset="0.62" stop-color="#c6c9c3"/><stop offset="0.82" stop-color="#b7c8a6"/><stop offset="1" stop-color="#b9ca98"/>
  </linearGradient>
  <radialGradient id="hdw2" cx="0.55" cy="0.35" r="0.75">
    <stop offset="0" stop-color="#ffffff"/><stop offset="0.6" stop-color="#fbfbfa"/><stop offset="1" stop-color="#e9ebe6"/>
  </radialGradient>
  <linearGradient id="epw2" x1="0" y1="0" x2="1" y2="0"><stop offset="0" stop-color="#27313d"/><stop offset="0.45" stop-color="#18202a"/><stop offset="0.75" stop-color="#0f131a"/><stop offset="1" stop-color="#0d1016"/></linearGradient>
  <filter id="b1w2" x="-20%" y="-20%" width="140%" height="140%"><feGaussianBlur stdDeviation="1.6"/></filter>
  <filter id="b2w2" x="-30%" y="-30%" width="160%" height="160%"><feGaussianBlur stdDeviation="3"/></filter>
  <filter id="b3w2" x="-40%" y="-40%" width="180%" height="180%"><feGaussianBlur stdDeviation="7"/></filter>
  <filter id="furw2" x="-20%" y="-20%" width="140%" height="140%"><feTurbulence type="fractalNoise" baseFrequency="0.32" numOctaves="2" seed="5" result="t"/><feDisplacementMap in="SourceGraphic" in2="t" scale="7" xChannelSelector="R" yChannelSelector="G" result="d"/><feGaussianBlur in="d" stdDeviation="1.1"/></filter>
  <filter id="b0w2" x="-20%" y="-20%" width="140%" height="140%"><feGaussianBlur stdDeviation="0.8"/></filter>
  <filter id="barkw2" x="0" y="0" width="100%" height="100%" color-interpolation-filters="sRGB">
    <feTurbulence type="fractalNoise" baseFrequency="0.12 0.04" numOctaves="4" seed="3" result="n"/>
    <feColorMatrix in="n" type="matrix" values="1.9 0 0 0 -0.44  1.9 0 0 0 -0.44  1.9 0 0 0 -0.44  0 0 0 0 1" result="g"/>
    <feComponentTransfer in="g" result="col">
      <feFuncR type="table" tableValues="0.14 0.21 0.29 0.37 0.46 0.56"/>
      <feFuncG type="table" tableValues="0.15 0.225 0.315 0.405 0.50 0.60"/>
      <feFuncB type="table" tableValues="0.17 0.25 0.355 0.46 0.56 0.67"/>
    </feComponentTransfer>
    <feTurbulence type="fractalNoise" baseFrequency="0.14 0.05" numOctaves="2" seed="33" result="n2"/>
    <feColorMatrix in="n2" type="matrix" values="0 0 0 0 0  0 0 0 0 0  0 0 0 0 0  0 3 0 0 -1.85" result="a2"/>
    <feFlood flood-color="#8a5f52" result="br"/>
    <feComposite in="br" in2="a2" operator="in" result="brown"/>
    <feMerge result="m0"><feMergeNode in="col"/><feMergeNode in="brown"/></feMerge><feGaussianBlur in="m0" stdDeviation="0.5" result="m"/>
    <feComposite in="m" in2="SourceGraphic" operator="in"/>
  </filter>
  <clipPath id="cpw2"><rect x="0" y="0" width="430" height="205"/></clipPath>
</defs>
<g clip-path="url(#cpw2)">
  <rect width="430" height="205" fill="url(#bgw2)"/>
  <!-- background blobs -->
  <ellipse cx="330" cy="10" rx="80" ry="28" fill="#dccfcf" filter="url(#b3w2)"/>
  <ellipse cx="405" cy="70" rx="40" ry="50" fill="#cccbce" filter="url(#b3w2)"/>
  <ellipse cx="410" cy="190" rx="40" ry="35" fill="#bfcc92" filter="url(#b3w2)"/>
  <ellipse cx="365" cy="195" rx="25" ry="25" fill="#a9c4a4" filter="url(#b3w2)"/>
  <!-- green strip between trunk and ear -->
  <rect x="106" y="-4" width="16" height="46" fill="#b9dfae" filter="url(#b1w2)"/>
  <!-- trunk -->
  <g filter="url(#barkw2)"><rect x="-2" y="-2" width="130" height="210" fill="#666d7e"/></g>
  <rect x="78" y="-2" width="40" height="210" fill="#23252c" opacity="0.32" filter="url(#b3w2)"/>
  <!-- cover right part of trunk block with bg where not trunk -->
  <path d="M112 -2 L112 34 Q104 60 98.6 78 Q90 105 87.5 122 Q83 150 83 167 Q83 190 87 207 L132 207 L132 -2 Z" fill="#dfe3da"/>
  <rect x="112" y="-4" width="10" height="44" fill="#b9dfae" filter="url(#b1w2)"/>
  <!-- head -->
  <path d="M113 38 Q150 -12 233 5 Q270 14 296 48 Q318 78 333 120 Q340 160 347 210 L84 210 Q80 165 88 122 Q94 92 113 38 Z" fill="url(#hdw2)" filter="url(#b2w2)"/>
  <path d="M113 38 Q150 -8 233 7 Q268 16 293 50 Q315 80 330 122 Q337 160 343 210 L90 210 Q85 165 92 122 Q98 92 113 38 Z" fill="#fdfdfc" filter="url(#b1w2)"/>
  <!-- lower-left greyish fur -->
  <ellipse cx="100" cy="180" rx="17" ry="50" fill="#8c9685" opacity="0.95" filter="url(#b3w2)"/>
  <ellipse cx="106" cy="200" rx="22" ry="20" fill="#98a291" opacity="0.9" filter="url(#b3w2)"/>
  <ellipse cx="215" cy="175" rx="26" ry="18" fill="#dcdfd9" opacity="0.9" filter="url(#b3w2)"/>
  <ellipse cx="284" cy="186" rx="18" ry="32" fill="#a5ad98" opacity="0.85" filter="url(#b3w2)"/>
  <!-- top-left ear -->
  <path d="M118 -4 L118 20 Q124 33 141 34.5 Q160 36 178 30 Q196 24 202 10 Q203 2 198 -4 Z" fill="#0d1014" filter="url(#furw2)"/>
  <ellipse cx="150" cy="37" rx="20" ry="4" fill="#8e9a86" opacity="0.55" filter="url(#b2w2)"/>
  <!-- right ear -->
  <path d="M320 86 Q334 72 354 75 Q378 79 386 104 Q392 126 381 146 Q368 164 346 159 Q328 154 320 132 Q313 108 320 86 Z" fill="#0c0f14" filter="url(#b2w2)"/>
  <path d="M324 90 Q336 78 354 80 Q374 84 381 106 Q386 126 376 143 Q365 157 347 153 Q331 148 325 130 Q319 108 324 90 Z" fill="#0b0e13" filter="url(#furw2)"/>
  <!-- shoulder dark -->
  <path d="M338 186 Q346 182 352 190 L356 210 L338 210 Z" fill="#2c3446" filter="url(#b1w2)"/>
  <!-- left eye patch -->
  <path d="M122 150 Q124 141 139 133 Q151 127 159 123 Q165 112 178 112 Q191 114 194 132 Q194 147 187 153 Q181 158 172 160 Q156 168 140 170 Q126 167 122 150 Z" fill="url(#epw2)" filter="url(#b2w2)"/>
  <path d="M127 150 Q129 143 142 136 Q153 130 162 126 Q167 117 178 117 Q188 119 190 132 Q190 145 184 150 Q179 154 171 156 Q156 163 141 165 Q130 163 127 150 Z" fill="url(#epw2)" filter="url(#furw2)"/>
  <circle cx="172.8" cy="138.6" r="7.6" fill="#0b0d12" filter="url(#b0w2)"/>
  <path d="M166.2 144 A7.8 7.8 0 0 1 171 131.2" fill="none" stroke="#c4ccd8" stroke-width="1.5" opacity="0.75" filter="url(#b0w2)"/>
  <path d="M166.4 144.2 A7.8 7.8 0 0 0 178 144.6" fill="none" stroke="#9aa4b4" stroke-width="1.3" opacity="0.6" filter="url(#b0w2)"/>
  <circle cx="173.2" cy="138.8" r="5.4" fill="#1b2634" filter="url(#b0w2)"/>
  <path d="M168.4 138.4 L176.6 134 L177.8 136.4 L169.6 140.8 Z" fill="#dcebff" filter="url(#b0w2)"/>
  <!-- right eye patch -->
  <path d="M230 178 Q236 158 252 152 Q266 154 266 172 Q266 192 262 210 L232 210 Q226 194 230 178 Z" fill="#0e1217" filter="url(#b2w2)"/>
  <path d="M233 180 Q238 162 252 157 Q262 158 262 174 Q262 192 259 210 L235 210 Q230 194 233 180 Z" fill="#0c1015" filter="url(#furw2)"/>
  <ellipse cx="243" cy="183" rx="5" ry="4" fill="#232830" filter="url(#b1w2)"/>
  <!-- bamboo leaf -->
  <path d="M38 207 Q52 166 82.5 133 Q81 158 68 182 Q61 196 56 207 Z" fill="#8fdc52" filter="url(#b0w2)"/>
  <path d="M46 207 Q60 170 80 140" stroke="#b4ea7c" stroke-width="2.4" fill="none" opacity="0.75" filter="url(#b1w2)"/>
</g>
</svg>

    <div class="caret"></div>
  </div>
  <div class="vscroll">
    <svg style="left:1.9px;top:3.1px" width="6.8" height="4.4" viewBox="0 0 8 5"><path d="M0 5 L4 0.4 L8 5 Z" fill="#8b8b8b"/></svg>
    <div class="vthumb"></div>
    <svg style="left:2.2px;top:367.6px" width="6.6" height="4.4" viewBox="0 0 8 5"><path d="M0 0 L4 4.6 L8 0 Z" fill="#8b8b8b"/></svg>
  </div>
  <div class="hscroll">
    <svg style="left:3px;top:2.5px" width="5" height="7" viewBox="0 0 5 7"><path d="M5 0 L0.4 3.5 L5 7 Z" fill="#8b8b8b"/></svg>
    <div class="hthumb"></div>
    <svg style="left:484.9px;top:2.5px" width="5" height="7" viewBox="0 0 5 7"><path d="M0 0 L4.6 3.5 L0 7 Z" fill="#8b8b8b"/></svg>
  </div>
  <div class="status">
    <span style="left:10px">Page</span>
    <div class="pgbox">1</div>
    <span style="left:49.5px">of&nbsp; 3</span>
    <div class="laybtn"><svg style="left:5px;top:4.6px" width="9" height="7.6" viewBox="0 0 9 7.6"><rect x="0.5" y="0.5" width="8" height="6.6" fill="none" stroke="#555" stroke-width="0.9"/><rect x="2" y="1.9" width="5" height="3.8" fill="#6e6e6e"/></svg></div>
    <svg style="left:439.7px;top:5px" width="9.4" height="9.4" viewBox="0 0 10 10"><path d="M0.8 0.6 H6.6 V5 M0.8 0.6 V7.8 H4.6" fill="none" stroke="#4a4a4a" stroke-width="1"/><path d="M2.2 2.6 H5.2 M2.2 4.4 H5.2" stroke="#6a6a6a" stroke-width="0.8"/><circle cx="7" cy="7.2" r="2.2" fill="#4a4a4a"/><circle cx="7" cy="7.2" r="1" fill="#fafafa"/></svg>
    <span style="left:462px;top:5.3px;transform:scaleX(0.92)">150%</span>
    <svg style="left:487.8px;top:7.9px" width="7.8" height="4.4" viewBox="0 0 8 5"><path d="M0 0 H8 L4 4.6 Z" fill="#111"/></svg>
  </div>
  <div class="bottomedge"></div>
  <div class="redge"></div>
</div>

<div class="shadow"></div>
<div class="divider"></div>
</body></html>
